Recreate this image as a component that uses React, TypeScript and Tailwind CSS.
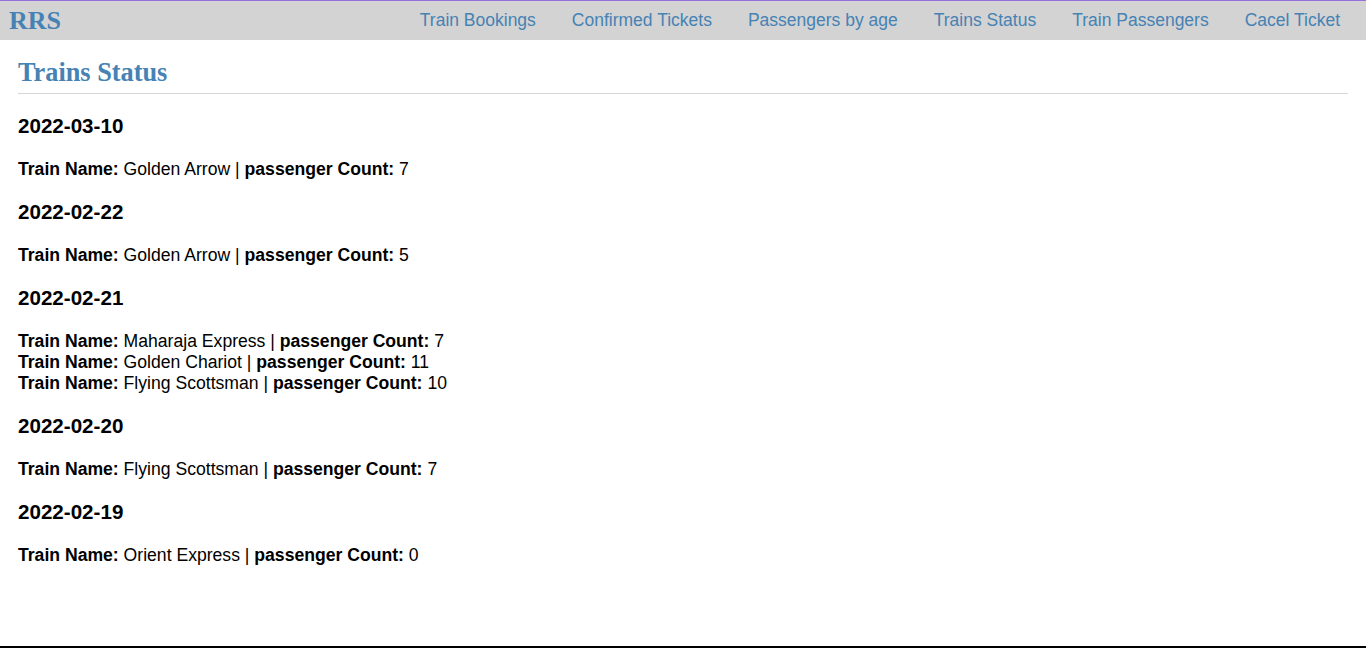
import React from 'react';

const navLinks = [
  'Train Bookings',
  'Confirmed Tickets',
  'Passengers by age',
  'Trains Status',
  'Train Passengers',
  'Cacel Ticket',
];

const statusByDate = [
  { date: '2022-03-10', trains: [{ name: 'Golden Arrow', count: 7 }] },
  { date: '2022-02-22', trains: [{ name: 'Golden Arrow', count: 5 }] },
  {
    date: '2022-02-21',
    trains: [
      { name: 'Maharaja Express', count: 7 },
      { name: 'Golden Chariot', count: 11 },
      { name: 'Flying Scottsman', count: 10 },
    ],
  },
  { date: '2022-02-20', trains: [{ name: 'Flying Scottsman', count: 7 }] },
  { date: '2022-02-19', trains: [{ name: 'Orient Express', count: 0 }] },
];

export default function App() {
  return (
    <div className="h-[648px] flex flex-col bg-white text-black font-['Liberation_Sans',Arial,sans-serif]">
      {/* Top nav */}
      <nav className="h-[40px] flex items-center justify-between bg-[#d3d3d3] border-t border-[#9370db]">
        <a className="pl-[9px] text-[26px] font-bold leading-[30px] text-[#4682b4] font-['Liberation_Serif','Times_New_Roman',serif]">
          RRS
        </a>
        <ul className="flex items-center pr-[8px]">
          {navLinks.map((link) => (
            <li key={link}>
              <a className="block px-[18px] text-[17.5px] leading-[21px] text-[#4682b4]">{link}</a>
            </li>
          ))}
        </ul>
      </nav>

      {/* Main content */}
      <main className="flex-1 px-[18px]">
        <h2 className="mt-[18px] pb-[6px] border-b border-[#d6d6d6] text-[26.3px] font-bold leading-[29px] text-[#4682b4] font-['Liberation_Serif','Times_New_Roman',serif]">
          Trains Status
        </h2>

        <div className="pt-[20px]">
          {statusByDate.map((group) => (
            <section key={group.date} className="mb-[20px]">
              <h3 className="text-[20.6px] font-bold leading-[24px] mb-[21px]">{group.date}</h3>
              <div>
                {group.trains.map((train) => (
                  <p key={train.name} className="text-[17.6px] leading-[21px]">
                    <b>Train Name:</b> {train.name} | <b>passenger Count:</b> {train.count}
                  </p>
                ))}
              </div>
            </section>
          ))}
        </div>
      </main>

      {/* Footer rule */}
      <div className="h-[2px] bg-black"></div>
    </div>
  );
}
